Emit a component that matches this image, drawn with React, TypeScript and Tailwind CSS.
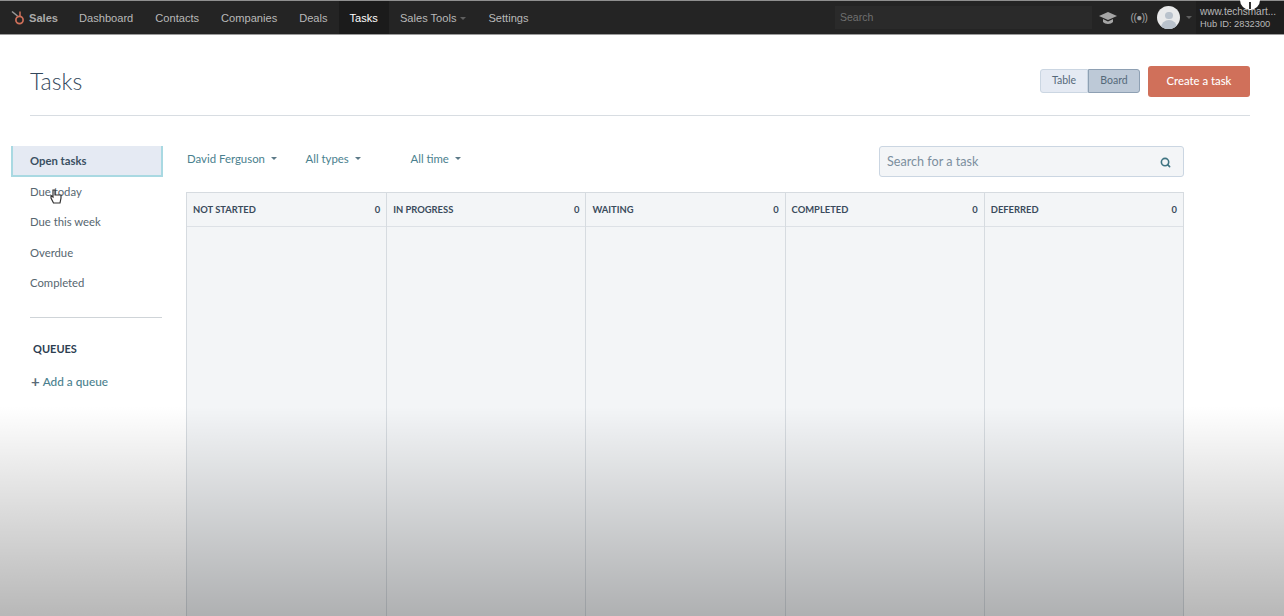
import { Search } from "lucide-react";

const navItems = ["Dashboard", "Contacts", "Companies", "Deals"];
const filters = [
  { label: "David Ferguson", className: "w-[118.5px]" },
  { label: "All types", className: "w-[105px]" },
  { label: "All time", className: "w-[100px]" },
];
const sideItems = ["Due today", "Due this week", "Overdue", "Completed"];
const columns = ["NOT STARTED", "IN PROGRESS", "WAITING", "COMPLETED", "DEFERRED"];

function Caret({ className }: { className: string }) {
  return <span className={`inline-block border-x-[3px] border-t-[3px] border-x-transparent ${className}`} />;
}

function Sprocket() {
  return (
    <svg width="14" height="16" viewBox="0 0 14 16" fill="none" className="mr-[4px]">
      <path d="M1 1.5 L6.5 6" stroke="#9a9a9a" strokeWidth="1.5" />
      <path d="M9 1.5 V6" stroke="#d0705a" strokeWidth="1.5" />
      <circle cx="8.5" cy="10" r="3.6" stroke="#d0705a" strokeWidth="1.7" />
    </svg>
  );
}

function TopNav() {
  return (
    <div className="h-[35px] shrink-0 border-t border-[#8f8f8f] border-b border-b-[#9b9b9b] bg-[#242424] font-['Liberation_Sans',sans-serif] text-[11.1px] text-[#b9b9b9] flex items-center relative">
      <div className="flex items-center pt-[1px] pl-[11px] w-[68px] font-bold text-[#aaaaaa]">
        <Sprocket />
        <span>Sales</span>
      </div>
      {navItems.map((item) => (
        <div key={item} className="h-full pt-[1px] flex items-center px-[11px]">
          {item}
        </div>
      ))}
      <div className="h-full pt-[1px] flex items-center px-[11px] bg-[#1b1b1b] text-white">Tasks</div>
      <div className="h-full pt-[1px] flex items-center gap-[4px] px-[11px]">
        Sales Tools
        <Caret className="border-t-[#5f5f5f]" />
      </div>
      <div className="h-full pt-[1px] flex items-center px-[11px]">Settings</div>
      <div className="ml-auto h-[23px] w-[257px] pt-[1px] bg-[#2a2a2a] flex items-center px-[5px] text-[10.5px] text-[#707070]">
        Search
      </div>
      <svg width="20" height="14" viewBox="0 0 20 14" className="ml-[6px]">
        <path d="M10 1 L19 5 L10 9 L1 5 Z" fill="#a5a5a5" />
        <path d="M5 8 V11 C7 13.5 13 13.5 15 11 V8 L10 10.5 Z" fill="#a5a5a5" />
      </svg>
      <span className="ml-[11px] w-[20px] text-center text-[10px] text-[#a5a5a5] whitespace-nowrap tracking-[-0.5px]">((●))</span>
      <div className="ml-[8px] w-[23px] h-[23px] rounded-full bg-[#e8e9ea] overflow-hidden flex flex-col items-center">
        <div className="mt-[6px] w-[8px] h-[8px] rounded-full bg-[#b9c2cc]" />
        <div className="mt-[1px] w-[16px] h-[10px] rounded-t-full bg-[#b9c2cc]" />
      </div>
      <Caret className="ml-[6px] border-t-[#5f5f5f]" />
      <div className="ml-[4px] w-[88px] h-full bg-[#1e1e1e] pl-[4px] text-[10px] leading-[13px] text-[#b8b8b8] flex flex-col justify-center whitespace-nowrap">
        <span>www.techsmart...</span>
        <span className="text-[9.3px]">Hub ID: 2832300</span>
      </div>
      <div className="absolute right-[24px] top-[-11px] w-[20px] h-[20px] rounded-full bg-white flex items-end justify-center">
        <div className="mb-[1px] w-[2px] h-[7px] bg-[#333]" />
      </div>
    </div>
  );
}

function Header() {
  return (
    <div className="mx-[30px] w-[1220px] h-[81px] pt-[12px] border-b border-[#d8dde2] flex items-center shrink-0">
      <h1 className="text-[23px] font-light text-[#33475b] leading-none">Tasks</h1>
      <div className="ml-auto flex h-[24px] text-[10.5px] text-[#55697a]">
        <div className="w-[48px] flex items-center justify-center bg-[#e5eaf3] border border-[#cbd6e2] rounded-l-[3px]">Table</div>
        <div className="w-[52px] flex items-center justify-center bg-[#bdc9d7] border border-[#8ea0b3] rounded-r-[3px]">Board</div>
      </div>
      <div className="ml-[8px] w-[102px] h-[31px] flex items-center justify-center rounded-[3px] bg-[#d0705a] text-white text-[11.3px] font-medium">
        Create a task
      </div>
    </div>
  );
}

function Sidebar() {
  return (
    <div className="w-[186px] shrink-0 pl-[11px] pt-[30px] text-[11.3px] text-[#56666f]">
      <div className="w-[152px] h-[31px] pl-[17px] pt-[1px] flex items-center bg-[#e5eaf3] border-x-2 border-b-2 border-x-[#a9d9e2] border-b-[#a9d9e2] font-bold text-[#3a5062]">
        Open tasks
      </div>
      {sideItems.map((item) => (
        <div key={item} className="h-[30.5px] pl-[19px] flex items-center">
          {item}
        </div>
      ))}
      <div className="ml-[19px] mt-[18px] w-[132px] border-t border-[#cfd4d8]" />
      <div className="ml-[22px] mt-[23px] text-[11px] font-bold text-[#2d3e50]">QUEUES</div>
      <div className="ml-[20px] mt-[15px] flex items-center gap-[3px] text-[11.8px] text-[#4a7f8e]">
        <span className="text-[#5a6b78] font-bold text-[15px] leading-none">+</span>
        <span className="font-medium">Add a queue</span>
      </div>
    </div>
  );
}

function Board() {
  return (
    <div className="w-[998px] flex-1 mt-[15px] border-x border-t border-[#d6dbe0] grid grid-cols-5 bg-[#f3f5f7]">
      {columns.map((col, i) => (
        <div key={col} className={`flex flex-col ${i > 0 ? "border-l border-[#d6dbe0]" : ""}`}>
          <div className="h-[34px] pt-[2px] px-[6px] border-b border-[#dde1e6] flex items-center justify-between text-[9.4px] font-bold text-[#3a4b5c]">
            <span>{col}</span>
            <span>0</span>
          </div>
        </div>
      ))}
    </div>
  );
}

export default function App() {
  return (
    <div className="relative h-[616px] w-[1284px] overflow-hidden bg-white font-['Lato',sans-serif] flex flex-col">
      <TopNav />
      <Header />
      <div className="flex flex-1 min-h-0">
        <Sidebar />
        <div className="flex-1 pt-[30px] pb-0 flex flex-col">
          <div className="w-[998px] h-[31px] flex items-center shrink-0">
            <div className="flex items-center text-[11.4px] text-[#4a7f8e] mb-[6px]">
              {filters.map((f) => (
                <div key={f.label} className={`${f.className} pl-[1px] flex items-center gap-[6px]`}>
                  {f.label}
                  <Caret className="border-t-[#5d7a88]" />
                </div>
              ))}
            </div>
            <div className="ml-auto w-[305px] h-[31px] pt-[1px] border border-[#cbd6e2] rounded-[3px] bg-[#f3f5f7] flex items-center justify-between pl-[7px] pr-[12px] text-[12.6px] text-[#7c8f9e]">
              Search for a task
              <Search size={11} strokeWidth={3.5} className="text-[#3f7482]" />
            </div>
          </div>
          <Board />
        </div>
      </div>
      {/* fade over the bottom of the page */}
      <div className="absolute inset-x-0 bottom-0 h-[210px] bg-gradient-to-b from-black/0 to-black/[0.28] pointer-events-none" />
      {/* hand cursor */}
      <svg width="12" height="15" viewBox="0 0 12 15" className="absolute left-[50px] top-[189px]">
        <path d="M3 1 V8 L1 6.5 V9 L3.5 14 H10 L11 9 V6 H5 V1 Z" fill="#fff" stroke="#333" strokeWidth="1.2" />
      </svg>
    </div>
  );
}
